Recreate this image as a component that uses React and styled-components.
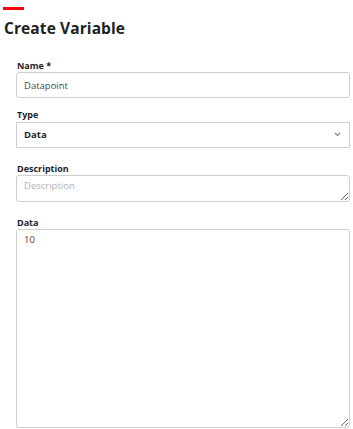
import React from "react";
import styled, { createGlobalStyle } from "styled-components";

const Global = createGlobalStyle`
  html, body { margin: 0; padding: 0; background: #fff; }
  body { font-family: "Open Sans", "Liberation Sans", sans-serif; color: #1f1f1f; }
  * { box-sizing: border-box; }
`;

const Page = styled.div`
  padding: 7px 3px 0 4px;
  width: 353px;
  height: 429px;
  overflow: hidden;
`;

const Accent = styled.div`
  width: 21px;
  height: 3px;
  background: #ff000f;
  margin-left: -1px;
`;

const Title = styled.h1`
  margin: 7px 0 0 0;
  font-size: 15.5px;
  line-height: 22px;
  font-weight: 700;
  color: #1f1f1f;
  letter-spacing: 0.1px;
`;

const Form = styled.form`
  display: flex;
  flex-direction: column;
  padding-left: 12px;
  margin-top: 21px;
`;

const Field = styled.div`
  display: flex;
  flex-direction: column;
  margin-bottom: ${(p) => p.$gap ?? 15}px;
`;

const Label = styled.label`
  font-size: 9px;
  font-weight: 700;
  line-height: 11px;
  margin: 0 0 1px 1px;
  color: #1f1f1f;
`;

const inputBase = `
  width: 100%;
  border: 1px solid #cfcfcf;
  border-radius: 3px;
  background: #fff;
  font-family: "Open Sans", "Liberation Sans", sans-serif;
  font-size: 9.5px;
  color: #464646;
  padding: 0 7px;
  outline: none;
`;

const TextInput = styled.input`
  ${inputBase}
  height: 26px;
`;

const SelectWrap = styled.div`
  position: relative;
`;

const Select = styled.select`
  ${inputBase}
  appearance: none;
  -webkit-appearance: none;
  height: 26px;
  font-weight: 700;
  color: #1f1f1f;
  border-radius: 0;
`;

const Chevron = styled.svg`
  position: absolute;
  right: 9px;
  top: 11px;
  width: 7px;
  height: 5px;
  pointer-events: none;
`;

const TextArea = styled.textarea`
  ${inputBase}
  display: block;
  resize: vertical;
  height: ${(p) => p.$h}px;
  padding: 3px 7px;
  line-height: 13px;
  &::placeholder { color: #b3b3b3; }
`;

export default function App() {
  return (
    <>
      <Global />
      <Page>
        <Accent />
        <Title>Create Variable</Title>
        <Form>
          <Field $gap={11}>
            <Label>Name *</Label>
            <TextInput defaultValue="Datapoint" />
          </Field>
          <Field>
            <Label>Type</Label>
            <SelectWrap>
              <Select defaultValue="Data">
                <option>Data</option>
              </Select>
              <Chevron viewBox="0 0 7 5">
                <path d="M1 1 L3.5 3.5 L6 1" fill="none" stroke="#6f8a7a" strokeWidth="1.1" />
              </Chevron>
            </SelectWrap>
          </Field>
          <Field>
            <Label>Description</Label>
            <TextArea $h={27} placeholder="Description" />
          </Field>
          <Field $gap={0}>
            <Label>Data</Label>
            <TextArea $h={199} defaultValue="10" />
          </Field>
        </Form>
      </Page>
    </>
  );
}
